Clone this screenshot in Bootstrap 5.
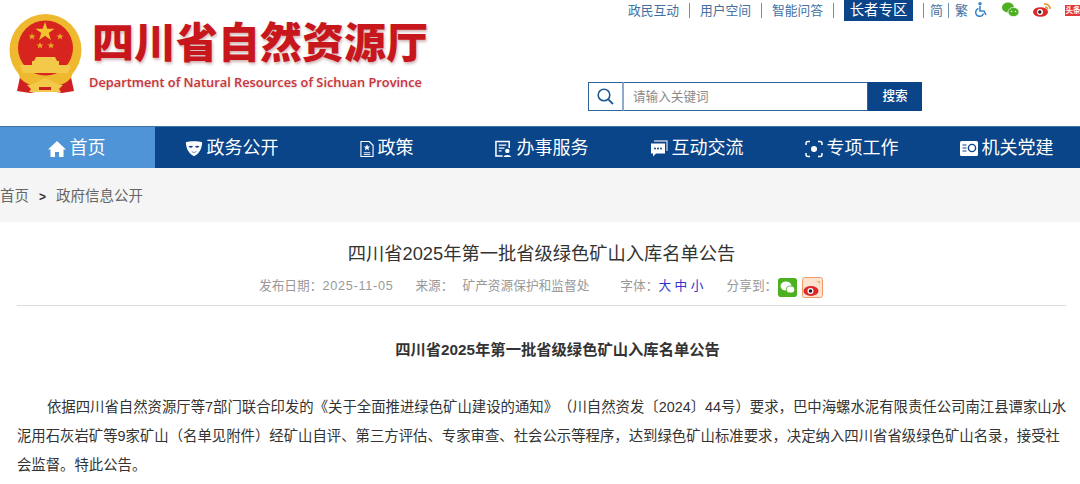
<!DOCTYPE html>
<html lang="zh-CN">
  <head>
    <meta charset="utf-8" />
    <meta name="viewport" content="width=device-width, initial-scale=1" />
    <title>四川省2025年第一批省级绿色矿山入库名单公告</title>
    <link href="https://cdn.jsdelivr.net/npm/bootstrap@5.3.6/dist/css/bootstrap.min.css" rel="stylesheet" />
    <style>
      body { font-family: "Liberation Sans", "Noto Sans CJK SC", sans-serif; color: #333; background: #fff; overflow: hidden; text-spacing-trim: space-all; }
      a { color: inherit; text-decoration: none; }
      .site-head { height: 126px; }
      .logo-box { padding: 13px 0 0 8px; width: 588px; }
      .logo-name { font-family: "Noto Sans CJK SC", sans-serif; font-weight: 900; font-size: 42px; line-height: 52px; color: #c8161d; text-shadow: 1px 2px 3px rgba(120,40,40,.35); white-space: nowrap; margin-top: 1px; }
      .logo-en { font-family: "Open Sans", sans-serif; font-weight: 600; font-size: 12.8px; line-height: 18px; color: #c9343b; text-shadow: 0 1px 2px rgba(120,40,40,.25); white-space: nowrap; margin-top: 7px; margin-left: -3px; }
      .head-right { width: 492px; }
      .top-links { font-size: 12.75px; color: #43709f; height: 21px; padding-left: 40px; white-space: nowrap; }
      .vline { width: 1px; height: 15px; background: #6b8fb3; flex-shrink: 0; margin: 0 10px; }
      .vline.tight { margin: 0 6px 0 5px; }
      .vline.first { margin: 0 6px 0 10px; }
      .lang-ch { font-size: 13px; }
      .t-ico { flex-shrink: 0; margin-left: 14px; margin-top: -3px; }
      .t-ico.wheel { margin-left: 7px; }
      .toutiao-ico { width: 16px; height: 11px; flex-shrink: 0; margin-left: 14px; margin-top: -1px; background: #e4393c; color: #fff; font-size: 7.500px; font-weight: 700; line-height: 11px; text-align: center; overflow: hidden; }
      .elder-tag { background: #0a4489; color: #fff; font-size: 14.4px; width: 69px; height: 21px; line-height: 21px; text-align: center; flex-shrink: 0; }
      .search-row { margin-top: 61px; height: 29px; width: 334px; }
      .search-ico { width: 36px; border: 1px solid #2f6399; border-right: 2px solid #8fabc9; background: #fff; }
      .search-input { width: 244px; border: 1px solid #2f6399; border-left: 0; height: 29px; padding: 0 9px; font-size: 12.6px; color: #888; outline: 0; }
      .search-input::placeholder { color: #8a8a8a; }
      .search-btn { width: 54px; background: #0a4489; color: #fff; border: 0; font-size: 12.6px; font-weight: 500; padding: 0; }
      .main-nav { height: 42px; background: #0a4489; border-top: 1px solid #3f74aa; overflow: hidden; }
      .main-nav a { flex: 0 0 155px; color: #fff; font-size: 18px; gap: 4px; white-space: nowrap; padding: 2px 2px 0 0; }
      .main-nav a.on { background: #4f94d6; }
      .crumb-bar { height: 54px; background: #f5f5f5; font-size: 14.5px; color: #666; padding-top: 3px; }
      .crumb-bar b { font-weight: 700; font-size: 12px; color: #333; margin: 0 10px; }
      .art { padding: 0 14px 0 17px; }
      .art-title { font-size: 18.25px; line-height: 28px; font-weight: 400; color: #333; margin: 18px 0 0; text-align: center; }
      .art-meta { height: 34px; margin-top: 4px; border-bottom: 1px solid #ddd; font-size: 12.7px; color: #999; padding-left: 242px; padding-bottom: 3px; white-space: nowrap; }
      .art-date { letter-spacing: .7px; }
      .m-src { margin-left: 22px; }
      .m-dept { margin-left: 9px; }
      .m-font { margin-left: 31px; }
      .m-share { margin-left: 23px; }
      .art-meta .fs { color: #3333cc; }
      .share-ico { width: 19px; height: 19px; border-radius: 2px; margin-left: 1px; flex-shrink: 0; }
      .share-ico.wb { width: 21px; height: 21px; margin-left: 5px; }
      .art-body { margin-right: -2px; }
      .art-body p { font-size: 14.38px; line-height: 29px; text-indent: 30px; margin: 0; color: #333; }
      .art-body p.head { text-align: center; font-weight: 700; font-size: 15.3px; margin-top: 29px; margin-bottom: 29px; }
    </style>
  </head>
  <body>
    <header class="site-head d-flex">
      <div class="logo-box d-flex flex-shrink-0 align-items-start">
        <!-- emblem -->
        <svg width="76" height="84" viewBox="0 0 76 84" class="flex-shrink-0">
          <path d="M14 55 L9 78 L22 80 L38 77 L54 80 L66 78 L61 55Z" fill="#cf1f22"/>
          <circle cx="37.500" cy="37" r="36" fill="#eeb92f"/>
          <circle cx="37.500" cy="35" r="27.500" fill="#d8241f"/>
          <path d="M37 9l2.300 6.800h7.200l-5.800 4.300 2.200 6.900-5.900-4.200-5.900 4.200 2.200-6.900-5.800-4.300h7.200z" fill="#f4c430"/>
          <path d="M24 20l.9 2.400h2.600l-2 1.600.7 2.600-2.200-1.500-2.200 1.500.7-2.600-2-1.600h2.600zM52 20l.9 2.400h2.600l-2 1.600.7 2.600-2.200-1.500-2.200 1.500.7-2.600-2-1.600h2.600zM32 29l.9 2.400h2.600l-2 1.600.7 2.600-2.200-1.500-2.200 1.500.7-2.600-2-1.600h2.600zM43 29l.9 2.400h2.600l-2 1.600.7 2.600-2.200-1.500-2.200 1.500.7-2.600-2-1.600h2.600z" fill="#e8a92a"/>
          <path d="M28 44h19l2 4H26zM24 48h27v4H24zM12 52h51l-3 8H15z" fill="#f3c94a"/>
          <path d="M10 59c8 9 18 11 27.500 8 9.500 3 19.500 1 27.500-8l-2 6c-7 8-17 9-25.500 6-8.500 3-18.500 2-25.500-6z" fill="#eeb92f"/>
          <path d="M19 72c7-1 12-4 18-7 6 3 11 6 18 7l-4 4 2 3H21l2-3z" fill="#f3c94a"/>
          <path d="M31 74h12v3H31z" fill="#cf1f22"/>
        </svg>
        <div class="ms-2">
          <div class="logo-name">四川省自然资源厅</div>
          <div class="logo-en">Department of Natural Resources of Sichuan Province</div>
        </div>
      </div>
      <div class="head-right">
        <div class="top-links d-flex align-items-center">
          <a href="#">政民互动</a><span class="vline"></span>
          <a href="#">用户空间</a><span class="vline"></span>
          <a href="#">智能问答</a><span class="vline"></span>
          <a class="elder-tag" href="#">长者专区</a><span class="vline first"></span>
          <a class="lang-ch" href="#">简</a><span class="vline tight"></span>
          <a class="lang-ch" href="#">繁</a>
          <svg class="t-ico wheel" width="13" height="15" viewBox="0 0 13 15"><circle cx="5" cy="1.700" r="1.700" fill="#3b86c8"/><path d="M5 4v5h4l2 4M3.500 6.500a4 4 0 1 0 5 5" fill="none" stroke="#3b86c8" stroke-width="1.600"/></svg>
          <svg class="t-ico" width="17" height="15" viewBox="0 0 17 15"><ellipse cx="6" cy="5.500" rx="6" ry="5" fill="#4cb020"/><ellipse cx="11.500" cy="10" rx="5.500" ry="4.600" fill="#4cb020" stroke="#fff" stroke-width=".7"/><circle cx="9.500" cy="9.500" r=".8" fill="#fff"/><circle cx="13.500" cy="9.500" r=".8" fill="#fff"/></svg>
          <svg class="t-ico" width="18" height="15" viewBox="0 0 18 15"><ellipse cx="7.500" cy="10" rx="7.500" ry="4.800" fill="#d9292b"/><circle cx="7" cy="10" r="3" fill="#fff"/><circle cx="6.800" cy="10" r="1.700" fill="#222"/><path d="M11 2a5 5 0 0 1 6 5M12 5a2.500 2.500 0 0 1 2.500 2.500" fill="none" stroke="#e8912d" stroke-width="1.500"/></svg>
          <span class="toutiao-ico">头条</span>
        </div>
        <div class="search-row d-flex">
          <div class="search-ico d-flex align-items-center justify-content-center">
            <svg width="17" height="17" viewBox="0 0 17 17"><circle cx="7" cy="7" r="5.800" fill="none" stroke="#1f5a94" stroke-width="1.600"/><path d="M11.300 11.300 16 16" stroke="#1f5a94" stroke-width="1.800"/></svg>
          </div>
          <input class="search-input" type="text" placeholder="请输入关键词" />
          <button class="search-btn" type="button">搜索</button>
        </div>
      </div>
    </header>
    <nav class="main-nav d-flex">
      <a class="on d-flex align-items-center justify-content-center" href="#">
        <svg width="18" height="18" viewBox="0 0 18 18"><path d="M9 1 18 9.500H15.500V17H11V12H7V17H2.500V9.500H0Z" fill="#fff"/></svg>首页</a>
      <a class="d-flex align-items-center justify-content-center" href="#">
        <svg width="18" height="18" viewBox="0 0 20 18"><path d="M1 1.500C6 0 14 0 19 1.500 19 9 15 15 10 17 5 15 1 9 1 1.500Z" fill="#fff"/><path d="M4 6c2-1 3.500-1 5 .5C7 8 5 8 4 6ZM16 6c-2-1-3.500-1-5 .5 2 1.500 4 1.500 5-.5ZM7 11.500c2 1 4 1 6 0-1 2-5 2-6 0Z" fill="#0a4489"/></svg>政务公开</a>
      <a class="d-flex align-items-center justify-content-center" href="#">
        <svg width="14" height="18" viewBox="0 0 15 18"><path d="M1 1h9l4 4v12H1Z" fill="none" stroke="#fff" stroke-width="1.200"/><path d="M7.500 4l1 2.400h2.500l-2 1.600.8 2.500-2.300-1.500-2.300 1.500.8-2.500-2-1.600H6.500z" fill="#fff"/><path d="M4 13h7M4 15h7" stroke="#fff"/></svg>政策</a>
      <a class="d-flex align-items-center justify-content-center" href="#">
        <svg width="18" height="18" viewBox="0 0 19 18"><path d="M8 16.500H1V1h14v7" fill="none" stroke="#fff" stroke-width="1.600"/><path d="M4 5h8M4 8h6M4 11h3" stroke="#fff" stroke-width="1.400"/><circle cx="13" cy="11" r="2.300" fill="#fff"/><path d="M9 17.500c0-3 8-3 8 0z" fill="#fff"/></svg>办事服务</a>
      <a class="d-flex align-items-center justify-content-center" href="#">
        <svg width="18" height="18" viewBox="0 0 18 18"><path d="M4 1h13v10" fill="none" stroke="#b8c9de" stroke-width="1.400"/><path d="M1 3.500h14v10H6l-3 3v-3H1z" fill="#fff"/><circle cx="5" cy="8.500" r="1" fill="#0a4489"/><circle cx="8" cy="8.500" r="1" fill="#0a4489"/><circle cx="11" cy="8.500" r="1" fill="#0a4489"/></svg>互动交流</a>
      <a class="d-flex align-items-center justify-content-center" href="#">
        <svg width="18" height="18" viewBox="0 0 18 18"><path d="M5 1.500H3Q1 1.500 1 3.500V5M13 1.500h2Q17 1.500 17 3.500V5M5 16.500H3Q1 16.500 1 14.500V13M13 16.500h2Q17 16.500 17 14.500V13" fill="none" stroke="#fff" stroke-width="1.500"/><circle cx="9" cy="9" r="3" fill="#fff"/></svg>专项工作</a>
      <a class="d-flex align-items-center justify-content-center" href="#">
        <svg width="18" height="17" viewBox="0 0 18 17"><rect y="1" width="18" height="15" rx="1.500" fill="#fff"/><path d="M2.500 5h4M2.500 8h4M2.500 11h4" stroke="#0a4489" stroke-width="1.200"/><circle cx="12" cy="8" r="3.600" fill="none" stroke="#0a4489" stroke-width="1.400"/></svg>机关党建</a>
    </nav>
    <div class="crumb-bar d-flex align-items-center">
      <a href="#">首页</a><b>&gt;</b><a href="#">政府信息公开</a>
    </div>
    <main class="art">
      <h1 class="art-title">四川省2025年第一批省级绿色矿山入库名单公告</h1>
      <div class="art-meta d-flex align-items-center">
        <span>发布日期：<span class="art-date">2025-11-05</span></span>
        <span class="m-src">来源：</span>
        <span class="m-dept">矿产资源保护和监督处</span>
        <span class="m-font">字体：</span>
        <span class="fs">大 中 小</span>
        <span class="m-share">分享到：</span>
        <svg class="share-ico" viewBox="0 0 19 19"><rect width="19" height="19" rx="2" fill="#4cb020"/><ellipse cx="8" cy="8" rx="5.500" ry="4.500" fill="#fff"/><ellipse cx="12.500" cy="11.500" rx="4.200" ry="3.500" fill="#fff" stroke="#4cb020" stroke-width=".8"/></svg>
        <svg class="share-ico wb" viewBox="0 0 21 21"><rect x=".5" y=".5" width="20" height="20" rx="2" fill="#fbe3cf" stroke="#ee9a68"/><path d="M13 4h5v6a5 5 0 0 0-5-6z" fill="#f2b04a"/><ellipse cx="9" cy="14" rx="7.500" ry="5" fill="#d9292b"/><circle cx="8.500" cy="14" r="3" fill="#fff"/><circle cx="8.500" cy="14" r="1.800" fill="#222"/></svg>
      </div>
      <div class="art-body">
        <p class="head">四川省2025年第一批省级绿色矿山入库名单公告</p>
        <p>依据四川省自然资源厅等7部门联合印发的《关于全面推进绿色矿山建设的通知》（川自然资发〔2024〕44号）要求，巴中海螺水泥有限责任公司南江县谭家山水泥用石灰岩矿等9家矿山（名单见附件）经矿山自评、第三方评估、专家审查、社会公示等程序，达到绿色矿山标准要求，决定纳入四川省省级绿色矿山名录，接受社会监督。特此公告。</p>
      </div>
    </main>
  </body>
</html>
